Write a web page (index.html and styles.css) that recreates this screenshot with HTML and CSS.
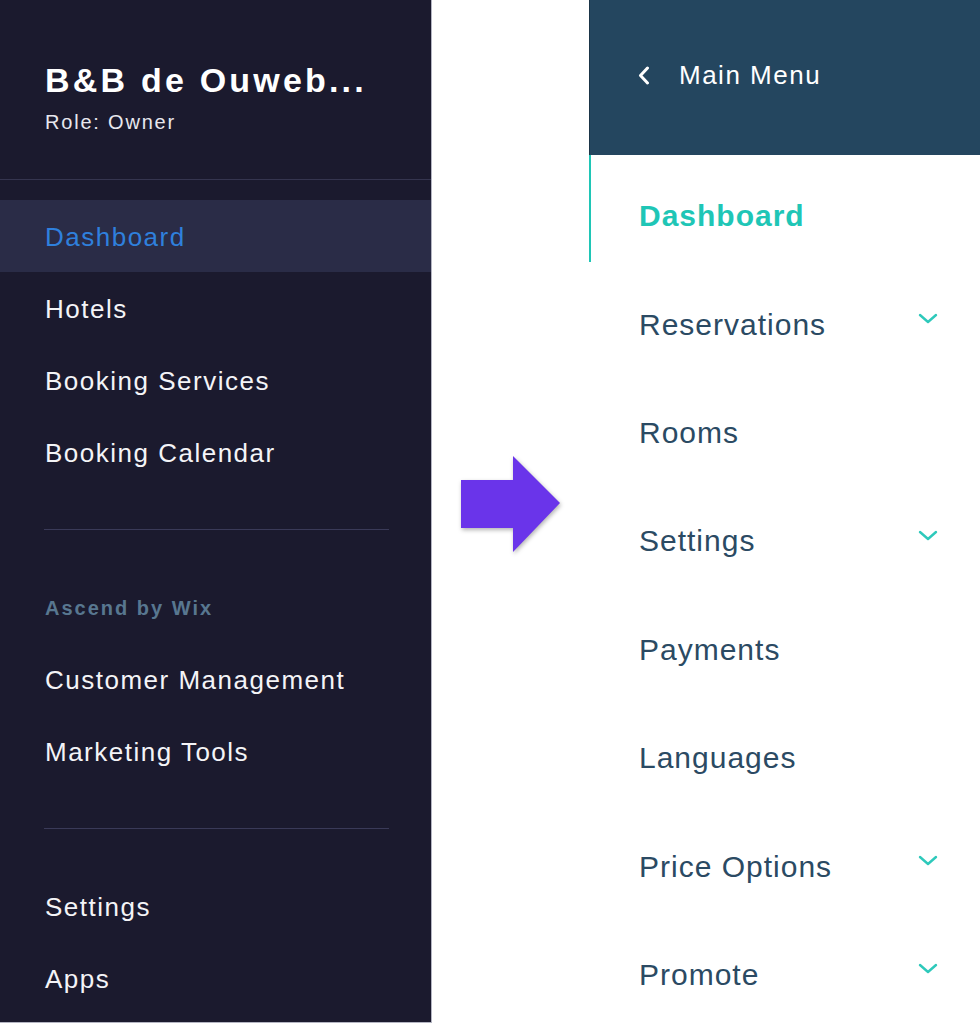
FILE: index.html
```html
<!DOCTYPE html>
<html lang="en">
<head>
<meta charset="utf-8">
<title>Menu comparison</title>
<link rel="stylesheet" href="styles.css">
</head>
<body>
<div class="page">
  <nav class="side">
    <header class="side-head">
      <div class="side-title">B&amp;B de Ouweb...</div>
      <div class="side-role">Role: Owner</div>
    </header>
    <ul class="side-list">
      <li class="side-item active">Dashboard</li>
      <li class="side-item">Hotels</li>
      <li class="side-item">Booking Services</li>
      <li class="side-item">Booking Calendar</li>
    </ul>
    <hr class="side-divider">
    <ul class="side-list">
      <li class="side-label">Ascend by Wix</li>
      <li class="side-item">Customer Management</li>
      <li class="side-item">Marketing Tools</li>
    </ul>
    <hr class="side-divider">
    <ul class="side-list">
      <li class="side-item">Settings</li>
      <li class="side-item">Apps</li>
    </ul>
  </nav>

  <div class="middle">
    <svg class="arrow" width="100" height="97" viewBox="0 0 100 97" aria-hidden="true">
      <polygon points="0,24 52,24 52,0 99,47 52,96 52,72 0,72" fill="#6a34ea"/>
    </svg>
  </div>

  <nav class="sub">
    <header class="sub-head">
      <svg class="back" width="12" height="19" viewBox="0 0 12 19" aria-hidden="true">
        <polyline points="9.5,2 2.5,9.5 9.5,17" fill="none" stroke="#ffffff" stroke-width="3" stroke-linecap="round" stroke-linejoin="round"/>
      </svg>
      <span class="sub-head-text">Main Menu</span>
    </header>
    <ul class="sub-list">
      <li class="sub-item active">Dashboard</li>
      <li class="sub-item">Reservations<svg class="chev" width="20" height="11" viewBox="0 0 20 11"><polyline points="2,2 10,9 18,2" fill="none" stroke="#2ec9bb" stroke-width="2.4" stroke-linecap="round" stroke-linejoin="round"/></svg></li>
      <li class="sub-item">Rooms</li>
      <li class="sub-item">Settings<svg class="chev" width="20" height="11" viewBox="0 0 20 11"><polyline points="2,2 10,9 18,2" fill="none" stroke="#2ec9bb" stroke-width="2.4" stroke-linecap="round" stroke-linejoin="round"/></svg></li>
      <li class="sub-item">Payments</li>
      <li class="sub-item">Languages</li>
      <li class="sub-item">Price Options<svg class="chev" width="20" height="11" viewBox="0 0 20 11"><polyline points="2,2 10,9 18,2" fill="none" stroke="#2ec9bb" stroke-width="2.4" stroke-linecap="round" stroke-linejoin="round"/></svg></li>
      <li class="sub-item">Promote<svg class="chev" width="20" height="11" viewBox="0 0 20 11"><polyline points="2,2 10,9 18,2" fill="none" stroke="#2ec9bb" stroke-width="2.4" stroke-linecap="round" stroke-linejoin="round"/></svg></li>
    </ul>
  </nav>
</div>
</body>
</html>
```

FILE: styles.css
```css
* {
  box-sizing: border-box;
}

html, body {
  margin: 0;
  padding: 0;
  background: #ffffff;
}

body {
  font-family: "Liberation Sans", Arial, sans-serif;
}

.page {
  display: flex;
  width: 980px;
  height: 1024px;
  overflow: hidden;
}

ul {
  list-style: none;
  margin: 0;
  padding: 0;
}

/* ---------- left dark sidebar ---------- */
.side {
  width: 432px;
  height: 1023px;
  flex: none;
  background: #1b1a2e;
  border-right: 1px solid #b4b5c2;
  border-bottom: 1px solid #b4b5c2;
  color: #ffffff;
}

.side-head {
  padding: 60px 0 45px 45px;
  border-bottom: 1px solid #35354f;
  margin-bottom: 20px;
}

.side-title {
  font-size: 34px;
  line-height: 40px;
  font-weight: bold;
  letter-spacing: 3.2px;
  white-space: nowrap;
}

.side-role {
  margin-top: 10px;
  font-size: 20px;
  line-height: 24px;
  letter-spacing: 1.8px;
  color: #e8e8ee;
}

.side-item {
  height: 72px;
  display: flex;
  align-items: center;
  padding: 3px 0 0 45px;
  font-size: 26px;
  letter-spacing: 1.5px;
  color: #f4f4f7;
}

.side-item.active {
  background: #2a2c47;
  color: #2f80dd;
}

.side-label {
  height: 72px;
  display: flex;
  align-items: center;
  padding: 2px 0 0 45px;
  font-size: 20px;
  font-weight: bold;
  letter-spacing: 2px;
  color: #587790;
}

.side-divider {
  margin: 41px 42px 41px 44px;
  border: 0;
  height: 1px;
  background: #3a3a58;
}

/* ---------- middle arrow ---------- */
.middle {
  width: 157px;
  flex: none;
  display: flex;
  justify-content: center;
  align-items: flex-start;
  padding-top: 456px;
}

.arrow {
  filter: drop-shadow(1px 2px 2px rgba(0, 0, 0, 0.3));
}

/* ---------- right sub menu ---------- */
.sub {
  flex: 1;
  min-width: 0;
}

.sub-head {
  height: 155px;
  background: #24465f;
  display: flex;
  align-items: center;
  padding: 0 0 5px 48px;
  gap: 29px;
  border-left: 1px solid #1b3548;
}

.sub-head-text {
  font-size: 26px;
  letter-spacing: 1.5px;
  color: #ffffff;
}

.sub-list {
  padding-top: 7px;
}

.sub-item {
  position: relative;
  height: 108.4px;
  display: flex;
  align-items: center;
  justify-content: space-between;
  padding: 0 42px 0 50px;
  font-size: 30px;
  letter-spacing: 1px;
  color: #2b4a63;
}

.sub-item.active {
  font-weight: bold;
  color: #1fc6b6;
}

.sub-item.active::before {
  content: "";
  position: absolute;
  left: 0;
  top: -7px;
  width: 2px;
  height: 107px;
  background: #1fc6b6;
}

.chev {
  margin-top: -12px;
  flex: none;
}
```
